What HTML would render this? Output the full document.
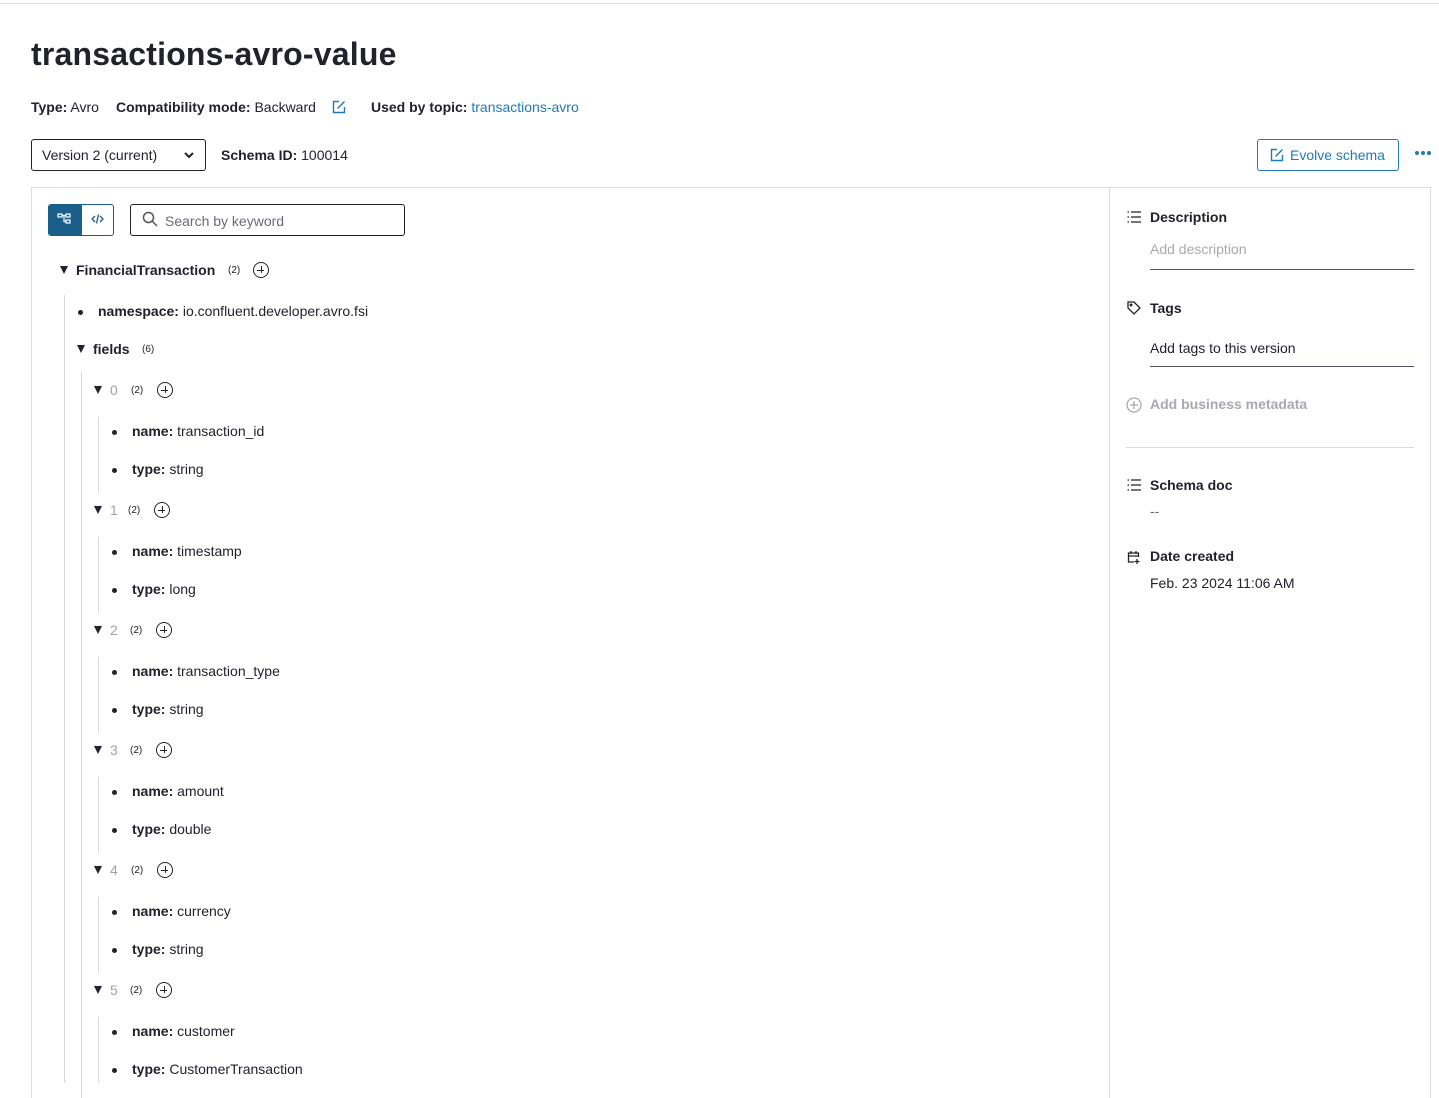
<!DOCTYPE html>
<html style="width:1439px;height:1098px;overflow:hidden"><head><meta charset="utf-8"><style>
*{box-sizing:border-box;margin:0;padding:0}
body{width:1439px;height:1098px;overflow:hidden;background:#fff;font-family:"Liberation Sans",sans-serif;color:#22222d;font-size:14px;position:relative}
.a{position:absolute;white-space:nowrap}
b{font-weight:bold}
.lnk{color:#1f7ab8}
.vl{position:absolute;width:1px;background:#d8d8de}
.cnt{font-size:10px}
.tri{position:absolute;width:0;height:0;border-left:4px solid transparent;border-right:4px solid transparent;border-top:8px solid #22222d}
.idx{color:#a0a0aa}
.plus{position:absolute;width:16px;height:16px;border:1.5px solid #22222d;border-radius:50%}
.plus:before{content:"";position:absolute;left:3px;top:6.5px;width:7px;height:1.5px;background:#22222d}
.plus:after{content:"";position:absolute;left:6.5px;top:3px;width:1.5px;height:7px;background:#22222d}
.dot{position:absolute;width:5px;height:5px;border-radius:50%;background:#22222d}
.ed{position:absolute;width:4px;height:4px;border-radius:50%;background:#1f7ab8}
</style></head><body>
<div class="a" style="left:0;top:3px;width:1439px;height:1px;background:#dcdce2"></div>
<div class="a" style="left:31px;top:36px;font-size:32px;font-weight:bold;letter-spacing:0.2px">transactions-avro-value</div>
<div class="a" style="left:31px;top:99px"><b>Type:</b> Avro</div>
<div class="a" style="left:116px;top:99px"><b>Compatibility mode:</b> Backward</div>
<svg class="a" style="left:332px;top:100px" width="14" height="14" viewBox="0 0 14 14" fill="none" stroke="#1f7ab8" stroke-width="1.4"><path d="M7 1.5H1.5v11h11V7"/><path d="M5.5 8.5l7-7"/></svg>
<div class="a" style="left:371px;top:99px"><b>Used by topic:</b> <span class="lnk">transactions-avro</span></div>
<div class="a" style="left:31px;top:139px;width:175px;height:32px;border:1.3px solid #22222d;border-radius:3px;padding:7px 0 0 10px">Version 2 (current)</div>
<svg class="a" style="left:183px;top:151px" width="12" height="8" viewBox="0 0 12 8" fill="none" stroke="#22222d" stroke-width="2"><path d="M2 2l4 4 4-4"/></svg>
<div class="a" style="left:221px;top:147px"><b>Schema ID:</b> 100014</div>
<div class="a lnk" style="left:1257px;top:139px;width:142px;height:32px;border:1.3px solid #1f7ab8;border-radius:3px;padding:7px 0 0 32px">Evolve schema</div>
<svg class="a" style="left:1270px;top:148px" width="14" height="14" viewBox="0 0 14 14" fill="none" stroke="#1f7ab8" stroke-width="1.4"><path d="M7 1.5H1.5v11h11V7"/><path d="M5.5 8.5l7-7"/></svg>
<div class="ed" style="left:1415px;top:151px"></div><div class="ed" style="left:1421px;top:151px"></div><div class="ed" style="left:1427px;top:151px"></div>
<div class="a" style="left:31px;top:187px;width:1400px;height:930px;border:1px solid #dcdce2"></div>
<div class="vl" style="left:1109px;top:188px;height:910px"></div>
<div class="a" style="left:48px;top:204px;width:66px;height:32px;border:1px solid #1a5e8a;border-radius:3px;overflow:hidden"><div style="width:33px;height:32px;background:#1a5e8a"></div></div>
<svg class="a" style="left:57px;top:212px" width="14" height="14" viewBox="0 0 14 14" fill="none" stroke="#fff" stroke-width="1.2"><rect x="1" y="2" width="4" height="3"/><rect x="9" y="2" width="4" height="3"/><rect x="9" y="8" width="4" height="3"/><path d="M5 3.5h4M7 3.5v6h2"/></svg>
<svg class="a" style="left:91px;top:213px" width="13" height="12" viewBox="0 0 13 12" fill="none" stroke="#1a5e8a" stroke-width="1.3"><path d="M4 3L1 6l3 3M9 3l3 3-3 3M7.5 1.5l-2 9"/></svg>
<div class="a" style="left:130px;top:204px;width:275px;height:32px;border:1.3px solid #22222d;border-radius:3px;padding:8px 0 0 34px;color:#6b6b78">Search by keyword</div>
<svg class="a" style="left:142px;top:211px" width="16" height="16" viewBox="0 0 16 16" fill="none" stroke="#55555f" stroke-width="1.5"><circle cx="6.5" cy="6.5" r="5"/><path d="M10 10l5 5"/></svg>
<div class="tri" style="left:60px;top:266px"></div>
<div class="a" style="left:76px;top:262px"><b>FinancialTransaction</b></div>
<div class="a cnt" style="left:228px;top:265px">(2)</div>
<div class="plus" style="left:253px;top:262px"></div>
<div class="vl" style="left:64px;top:295px;height:788px"></div>
<div class="dot" style="left:78px;top:310px"></div>
<div class="a" style="left:98px;top:303px"><b>namespace:</b> io.confluent.developer.avro.fsi</div>
<div class="tri" style="left:77px;top:345px"></div>
<div class="a" style="left:93px;top:341px"><b>fields</b></div>
<div class="a cnt" style="left:142px;top:344px">(6)</div>
<div class="vl" style="left:81px;top:372px;height:726px"></div>

<div class="tri" style="left:94px;top:386px"></div><div class="a idx" style="left:110px;top:382px">0</div><div class="a cnt" style="left:131px;top:385px">(2)</div><div class="plus" style="left:157px;top:382px"></div>
<div class="vl" style="left:98px;top:417px;height:76px"></div>
<div class="dot" style="left:112px;top:430px"></div><div class="a" style="left:132px;top:423px"><b>name:</b> transaction_id</div>
<div class="dot" style="left:112px;top:468px"></div><div class="a" style="left:132px;top:461px"><b>type:</b> string</div>

<div class="tri" style="left:94px;top:506px"></div><div class="a idx" style="left:110px;top:502px">1</div><div class="a cnt" style="left:128px;top:505px">(2)</div><div class="plus" style="left:154px;top:502px"></div>
<div class="vl" style="left:98px;top:537px;height:76px"></div>
<div class="dot" style="left:112px;top:550px"></div><div class="a" style="left:132px;top:543px"><b>name:</b> timestamp</div>
<div class="dot" style="left:112px;top:588px"></div><div class="a" style="left:132px;top:581px"><b>type:</b> long</div>

<div class="tri" style="left:94px;top:626px"></div><div class="a idx" style="left:110px;top:622px">2</div><div class="a cnt" style="left:130px;top:625px">(2)</div><div class="plus" style="left:156px;top:622px"></div>
<div class="vl" style="left:98px;top:657px;height:76px"></div>
<div class="dot" style="left:112px;top:670px"></div><div class="a" style="left:132px;top:663px"><b>name:</b> transaction_type</div>
<div class="dot" style="left:112px;top:708px"></div><div class="a" style="left:132px;top:701px"><b>type:</b> string</div>

<div class="tri" style="left:94px;top:746px"></div><div class="a idx" style="left:110px;top:742px">3</div><div class="a cnt" style="left:130px;top:745px">(2)</div><div class="plus" style="left:156px;top:742px"></div>
<div class="vl" style="left:98px;top:777px;height:76px"></div>
<div class="dot" style="left:112px;top:790px"></div><div class="a" style="left:132px;top:783px"><b>name:</b> amount</div>
<div class="dot" style="left:112px;top:828px"></div><div class="a" style="left:132px;top:821px"><b>type:</b> double</div>

<div class="tri" style="left:94px;top:866px"></div><div class="a idx" style="left:110px;top:862px">4</div><div class="a cnt" style="left:131px;top:865px">(2)</div><div class="plus" style="left:157px;top:862px"></div>
<div class="vl" style="left:98px;top:897px;height:76px"></div>
<div class="dot" style="left:112px;top:910px"></div><div class="a" style="left:132px;top:903px"><b>name:</b> currency</div>
<div class="dot" style="left:112px;top:948px"></div><div class="a" style="left:132px;top:941px"><b>type:</b> string</div>

<div class="tri" style="left:94px;top:986px"></div><div class="a idx" style="left:110px;top:982px">5</div><div class="a cnt" style="left:130px;top:985px">(2)</div><div class="plus" style="left:156px;top:982px"></div>
<div class="vl" style="left:98px;top:1017px;height:66px"></div>
<div class="dot" style="left:112px;top:1030px"></div><div class="a" style="left:132px;top:1023px"><b>name:</b> customer</div>
<div class="dot" style="left:112px;top:1068px"></div><div class="a" style="left:132px;top:1061px"><b>type:</b> CustomerTransaction</div>

<svg class="a" style="left:1127px;top:211px" width="14" height="12" viewBox="0 0 14 12" fill="none" stroke="#22222d" stroke-width="1.3"><path d="M4 1h10M4 6h10M4 11h10M0.5 1h1.5M0.5 6h1.5M0.5 11h1.5"/></svg>
<div class="a" style="left:1150px;top:209px"><b>Description</b></div>
<div class="a" style="left:1150px;top:241px;color:#a8a8b2">Add description</div>
<div class="a" style="left:1150px;top:269px;width:264px;height:1px;background:#55556a"></div>
<svg class="a" style="left:1127px;top:301px" width="14" height="14" viewBox="0 0 14 14" fill="none" stroke="#22222d" stroke-width="1.3"><path d="M1 1h6l6 6-6 6-6-6z"/><circle cx="4" cy="4" r="0.8"/></svg>
<div class="a" style="left:1150px;top:300px"><b>Tags</b></div>
<div class="a" style="left:1150px;top:340px">Add tags to this version</div>
<div class="a" style="left:1150px;top:366px;width:264px;height:1px;background:#55556a"></div>
<svg class="a" style="left:1126px;top:397px" width="16" height="16" viewBox="0 0 16 16" fill="none" stroke="#a8a8b2" stroke-width="1.3"><circle cx="8" cy="8" r="7"/><path d="M4 8h8M8 4v8"/></svg>
<div class="a" style="left:1150px;top:396px;color:#a8a8b2"><b>Add business metadata</b></div>
<div class="a" style="left:1126px;top:447px;width:288px;height:1px;background:#dcdce2"></div>
<svg class="a" style="left:1127px;top:479px" width="14" height="12" viewBox="0 0 14 12" fill="none" stroke="#22222d" stroke-width="1.3"><path d="M4 1h10M4 6h10M4 11h10M0.5 1h1.5M0.5 6h1.5M0.5 11h1.5"/></svg>
<div class="a" style="left:1150px;top:477px"><b>Schema doc</b></div>
<div class="a" style="left:1150px;top:503px;color:#6b6b78">--</div>
<svg class="a" style="left:1127px;top:550px" width="14" height="14" viewBox="0 0 14 14" fill="none" stroke="#22222d" stroke-width="1.3"><path d="M7 12H1.5V3h10v4M1.5 6h10M4 1v3M9 1v3M10 9v5M7.5 11.5h5"/></svg>
<div class="a" style="left:1150px;top:548px"><b>Date created</b></div>
<div class="a" style="left:1150px;top:575px">Feb. 23 2024 11:06 AM</div>
</body></html>
